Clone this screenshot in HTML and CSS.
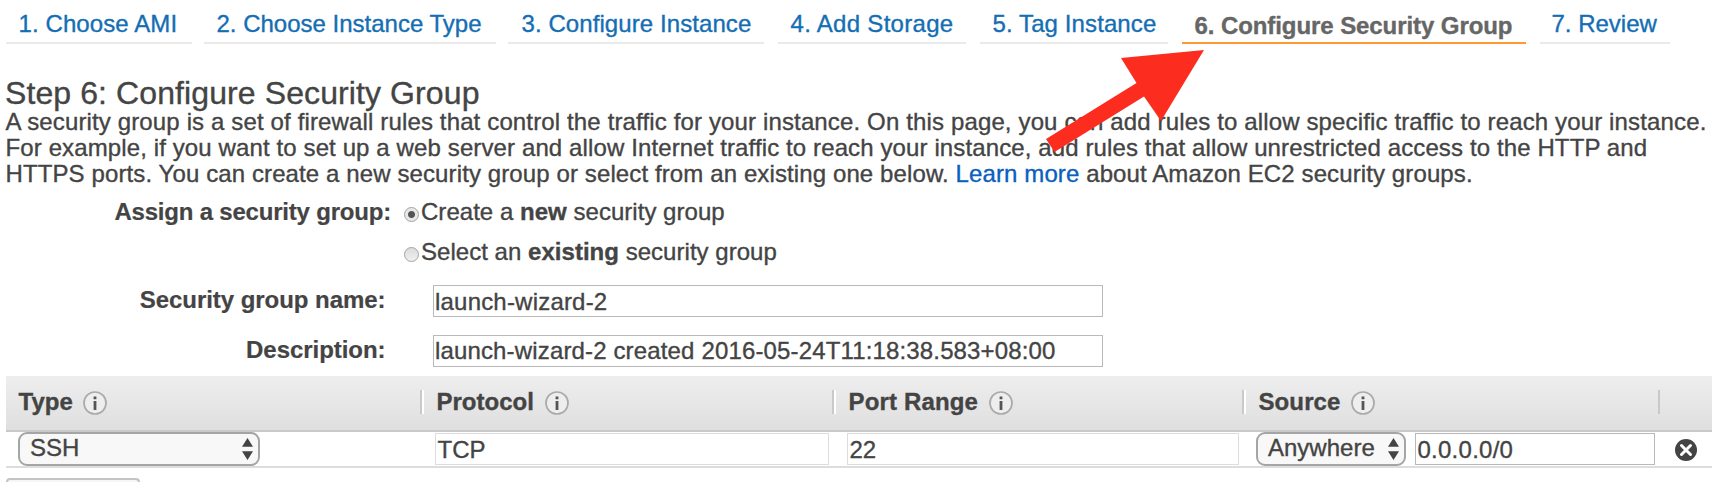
FILE: index.html
```html
<!DOCTYPE html>
<html lang="en">
<head>
<meta charset="utf-8">
<title>Configure Security Group</title>
<link rel="stylesheet" href="styles.css">
</head>
<body>
<nav class="steps">
  <a class="step s1">1. Choose AMI</a>
  <a class="step s2">2. Choose Instance Type</a>
  <a class="step s3">3. Configure Instance</a>
  <a class="step s4">4. Add Storage</a>
  <a class="step s5">5. Tag Instance</a>
  <a class="step s6 current">6. Configure Security Group</a>
  <a class="step s7">7. Review</a>
</nav>
<h1>Step 6: Configure Security Group</h1>
<p class="intro">
  <span class="l1">A security group is a set of firewall rules that control the traffic for your instance. On this page, you can add rules to allow specific traffic to reach your instance.</span><br>
  <span class="l2">For example, if you want to set up a web server and allow Internet traffic to reach your instance, add rules that allow unrestricted access to the HTTP and</span><br>
  <span class="l3">HTTPS ports. You can create a new security group or select from an existing one below. <a class="link">Learn more</a> about Amazon EC2 security groups.</span>
</p>
<section class="form">
  <div class="row assign"><b class="label">Assign a security group:</b><i class="radio on"></i><span class="option">Create a <b>new</b> security group</span></div>
  <div class="row select"><b class="label"></b><i class="radio"></i><span class="option">Select an <b>existing</b> security group</span></div>
  <div class="row name"><b class="label">Security group name:</b><div class="field">launch-wizard-2</div></div>
  <div class="row desc"><b class="label">Description:</b><div class="field">launch-wizard-2 created 2016-05-24T11:18:38.583+08:00</div></div>
</section>
<section class="rules">
  <div class="head">
    <div class="th th-type">Type<svg class="info" viewBox="0 0 24 24"><circle cx="12" cy="12" r="11"/><path d="M12 10v9M12 5.500v2.700"/></svg></div>
    <div class="th th-proto">Protocol<svg class="info" viewBox="0 0 24 24"><circle cx="12" cy="12" r="11"/><path d="M12 10v9M12 5.500v2.700"/></svg></div>
    <div class="th th-port">Port Range<svg class="info" viewBox="0 0 24 24"><circle cx="12" cy="12" r="11"/><path d="M12 10v9M12 5.500v2.700"/></svg></div>
    <div class="th th-source">Source<svg class="info" viewBox="0 0 24 24"><circle cx="12" cy="12" r="11"/><path d="M12 10v9M12 5.500v2.700"/></svg></div>
    <div class="th th-end"></div>
  </div>
  <div class="rule">
    <div class="dropdown type">SSH<svg class="arrows" viewBox="0 0 11 22"><path d="M5.500 0L11 8.800H0zM5.500 22L11 13.200H0z"/></svg></div>
    <div class="cell proto">TCP</div>
    <div class="cell port">22</div>
    <div class="dropdown source">Anywhere<svg class="arrows" viewBox="0 0 11 22"><path d="M5.500 0L11 8.800H0zM5.500 22L11 13.200H0z"/></svg></div>
    <div class="cell cidr">0.0.0.0/0</div>
    <svg class="remove" viewBox="0 0 22 22"><circle cx="11" cy="11" r="11"/><path d="M6.500 6.500l9 9M15.500 6.500l-9 9"/></svg>
  </div>
  <div class="add"></div>
</section>
<svg class="pointer" viewBox="0 0 160 104"><path d="M158 2L75 10l15.500 25L0 91l8.500 13L98 48.500 115 73z"/></svg>
</body>
</html>
```
FILE: styles.css
```css
* { box-sizing: border-box; }
body {
  margin: 0;
  width: 1712px;
  height: 482px;
  overflow: hidden;
  position: relative;
  background: #fff;
  color: #444;
  font: 24px/26px "Liberation Sans", Arial, sans-serif;
  white-space: nowrap;
  -webkit-text-stroke: 0.35px;
}
svg { display: block; flex: none; }
.steps { display: flex; height: 44px; padding-left: 6px; }
.step { border-bottom: 2px solid #eaeaea; padding: 11px 0 0 12.5px; color: #146eb4; }
.s1 { width: 186px; margin-right: 12px; letter-spacing: 0.1px; }
.s2 { width: 292px; margin-right: 12px; }
.s3 { width: 256px; margin-right: 14px; padding-left: 13.5px; letter-spacing: 0.08px; }
.s4 { width: 188px; margin-right: 14px; letter-spacing: 0.3px; }
.s5 { width: 188px; margin-right: 14px; letter-spacing: 0.1px; }
.s6 { width: 344px; margin-right: 14px; letter-spacing: -0.08px; }
.s7 { width: 130px; padding-left: 11.5px; }
.current { border-color: #f93; color: #666; font-weight: bold; padding-top: 13px; }
h1 { margin: 32px 0 -1px 5px; font-size: 32px; line-height: 34px; font-weight: normal; letter-spacing: 0.1px; }
.intro { margin: 0 0 0 5.5px; }
.l1 { letter-spacing: 0.14px; }
.l2 { letter-spacing: 0.115px; }
.l3 { letter-spacing: 0.11px; }
.link { color: #0a5fc0; }
.row { display: flex; }
.label { width: 391px; text-align: right; letter-spacing: -0.05px; -webkit-text-stroke-width: 0.2px; }
.assign { margin-top: 12px; }
.assign .label { letter-spacing: -0.2px; }
.select { margin-top: 14px; }
.option { letter-spacing: 0.03px; }
.radio { width: 15px; height: 15px; margin: 8px 2px 0 13px; border: 1px solid #a3a3a3; border-radius: 50%; background: linear-gradient(#dcdcdc, #f0f0f0); }
.on { background: radial-gradient(circle, #555 0 3px, #e8e8e8 4px); }
.name { margin-top: 20px; }
.desc { margin-top: 18px; }
.name .label, .desc .label { width: 385.5px; padding-top: 2px; }
.field { width: 670px; height: 32px; margin-left: 47.5px; border: 1px solid #b9b9b9; padding: 3px 0 0 1px; letter-spacing: 0.2px; }
.desc .field { padding-top: 2px; letter-spacing: 0.15px; }
.rules { margin: 9px 0 0 6px; }
.head { display: flex; height: 56px; border-bottom: 2px solid #c9c9c9; background: linear-gradient(#eee, #dfdfdf); font-weight: bold; line-height: 24px; padding: 14px 0; }
.th { display: flex; gap: 11px; height: 24px; border-left: 2px solid #c9c9c9; box-shadow: inset 2px 0 #fff; padding-left: 14.5px; }
.th-type { width: 414px; border: 0; box-shadow: none; padding-left: 12.5px; gap: 10px; }
.th-proto { width: 412px; }
.th-port { width: 410px; letter-spacing: 0.15px; }
.th-source { width: 416px; letter-spacing: 0.1px; gap: 10.5px; }
.th-end { width: 54px; box-shadow: none; }
.info { width: 24px; height: 24px; margin-top: 1px; fill: #eee; stroke: #aaa; stroke-width: 1.700px; }
.info path { stroke: #555; stroke-width: 2.800px; }
.rule { display: flex; height: 36px; border-bottom: 2px solid #ddd; padding-left: 12px; }
.dropdown { display: flex; justify-content: space-between; height: 34px; border: 2px solid #a5a5a5; border-radius: 9px; background: #f8f8f8; padding: 1px 5px 0 10px; }
.arrows { width: 11px; height: 22px; margin-top: 3px; fill: #444; }
.cell { height: 32px; margin-top: 1px; border: 1px solid #ddd; padding: 3px 0 0 1.5px; }
.type { width: 242px; }
.proto { width: 394px; margin-left: 175px; }
.port { width: 392px; margin-left: 18px; }
.source { width: 150px; margin-left: 17px; }
.cidr { width: 240px; margin-left: 9px; border-color: #b9b9b9; letter-spacing: 0.25px; }
.remove { width: 22px; height: 22px; margin: 7px 0 0 20px; fill: #444; stroke: #fff; }
.remove circle { stroke: none; }
.remove path { stroke-width: 3px; stroke-linecap: round; }
.add { width: 134px; height: 4px; margin-top: 10px; border: 2px solid #c4c4c4; border-bottom: 0; border-radius: 6px 6px 0 0; background: #f6f6f6; }
.pointer { position: absolute; left: 1046px; top: 48px; width: 160px; height: 104px; fill: #fc2d1f; }
```
